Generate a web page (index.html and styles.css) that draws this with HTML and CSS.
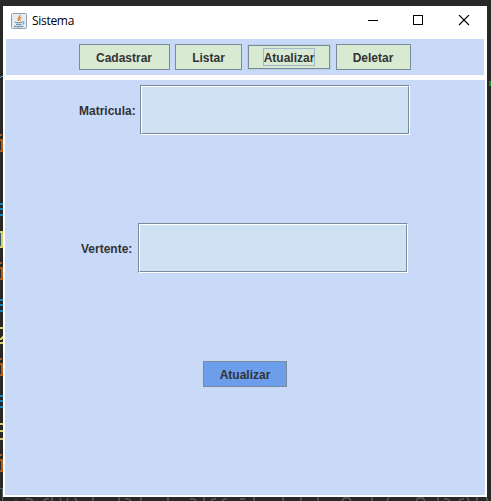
FILE: index.html
```html
<!DOCTYPE html>
<html lang="pt-BR">
<head>
<meta charset="utf-8">
<title>Sistema</title>
<link rel="stylesheet" href="styles.css">
</head>
<body>
<svg class="backdrop" width="491" height="501" viewBox="0 0 491 501" aria-hidden="true" fill="none" shape-rendering="crispEdges">
  <path d="M0 77.5h1M1 76.5h2" stroke="#45b7c5"/>
  <g stroke="#b75a18" stroke-width="2">
    <path d="M0 135h2M0 140h2V151H0M0 263h2M0 268h2V279H0M0 359h2M0 364h2V375H0M0 455h2M0 460h2V471H0"/>
  </g>
  <path d="M0 204h3M0 209h3M0 215h3M0 300h3M0 305h3M0 311h3M0 396h3M0 401h3M0 407h3" stroke="#1686b6" stroke-width="2"/>
  <path d="M0 231v16" stroke="#315865" stroke-width="2"/>
  <path d="M0 232h2V247H0M0 328h3M0 340l3-3M0 343h3M0 424h3M0 431h3M0 439h3" stroke="#d8cc67" stroke-width="2"/>
  <path d="M0 488h2v13" stroke="#53606d"/>
  <path d="M490 81v5" stroke="#168a20" stroke-width="2"/>
  <g stroke="#5b5c5c" stroke-width="1.500" shape-rendering="auto">
    <path d="M16 500v1M26 499q4-1 7 2M44 501q1-3 5-2M52 497v4M60 498l1 3M68 498l-1 3M75 498l2 3M93 497v4M119 497v4M125 499q4-1 6 2M141 497v4M168 497v4M190 499q4-1 6 2M204 497v4M211 501q2-3 5-2M222 501q2-3 5-2M240 499h5M254 497v4M283 497v4M301 497v4M318 497v4M342 501l2-3h5l2 3M372 497v4M389 497l-2 4M416 501l2-3h5l2 3M438 497v4M444 499q4-1 6 2M459 501q2-3 5-2M467 497l2 4M477 497v4M486 497l2 4"/>
  </g>
</svg>
<main class="window">
  <header class="titlebar">
    <svg class="java" width="16" height="16" viewBox="0 0 16 16" fill="none">
      <rect x=".5" y=".5" width="15" height="15" rx="1" fill="#e5edf3" stroke="#8fa1b0"/>
      <path d="M8.800 2c.7 2-3.200 3-1.400 6M10.400 4.200c-2.200 1.100-2.300 2-.9 3.500" stroke="#e47b24" stroke-width="1.200"/>
      <path d="M4 9.200c1.500.8 5.400.8 7 0M5 11.300c1.600.6 3.800.6 5.400 0M3 13.200c3 .8 7 .8 9.500-.2M11.400 8.800c2.300-.4 2.200 1.800.1 2.300" stroke="#557b9b"/>
    </svg>
    <h1 class="title">Sistema</h1>
    <svg class="controls" width="110" height="12" viewBox="0 0 110 12" fill="none" stroke="#000">
      <path d="M0 5.500h10" shape-rendering="crispEdges"/>
      <path d="M45.500.5h9v9h-9z" shape-rendering="crispEdges"/>
      <path d="M91 0l10 10M101 0L91 10" stroke-width="1.100"/>
    </svg>
  </header>
  <nav class="toolbar">
    <button class="button cadastrar">Cadastrar</button>
    <button class="button listar">Listar</button>
    <button class="button focused"><span class="focus-label">Atualizar</span></button>
    <button class="button deletar">Deletar</button>
  </nav>
  <form class="panel">
    <label class="row"><span class="label matricula">Matricula:</span><span class="field"><input class="input" type="text"></span></label>
    <label class="row"><span class="label vertente">Vertente:</span><span class="field"><input class="input" type="text"></span></label>
    <button class="button submit" type="button">Atualizar</button>
  </form>
</main>
</body>
</html>
```
FILE: styles.css
```css
* { box-sizing: border-box; }
html { height: 100%; overflow: hidden; }
body {
  margin: 0;
  height: 100%;
  padding: 6px 4px 4px 3px;
  overflow: hidden;
  background: #282828;
  color: #333;
  font: bold 12px "Liberation Sans", Arial, sans-serif;
}
.backdrop { position: absolute; top: 0; left: 0; }
.window {
  position: relative;
  width: 484px;
  height: 491px;
  background: #fff;
}
.titlebar {
  display: flex;
  align-items: center;
  height: 33px;
  padding: 0 9px 4px 8px;
}
.title {
  margin: 0 0 0 5px;
  color: #000;
  font: 12px/16px "Open Sans", sans-serif;
  letter-spacing: -.3px;
}
.controls { margin-left: auto; }
.toolbar {
  display: flex;
  gap: 5px;
  height: 36px;
  margin: 0 3px;
  padding: 5px 0 5px 73px;
  background: #c9daf8;
}
.button {
  display: flex;
  align-items: center;
  justify-content: center;
  height: 26px;
  margin: 0;
  padding: 1px 0 0;
  border: 1px solid #7a8a99;
  border-radius: 0;
  background: #d9ead3;
  color: #333;
  font: inherit;
  line-height: 14px;
}
.cadastrar { width: 91px; padding-right: 1px; }
.listar { width: 67px; }
.deletar { width: 75px; padding-right: 1px; }
.focused {
  width: 84px;
  padding: 0;
  border-color: #b8cfe5;
  box-shadow: inset 0 0 0 1px #7a8a99;
}
.focus-label {
  display: flex;
  align-items: center;
  justify-content: center;
  width: 52px;
  height: 18px;
  padding-top: 1px;
  border: 1px solid #a3b8cc;
}
.panel {
  display: flex;
  flex-direction: column;
  align-items: center;
  gap: 88px;
  height: 415px;
  margin: 5px 2px 0;
  padding-top: 5px;
  background: #c9daf8;
}
.row {
  display: flex;
  align-items: center;
  gap: 5px;
  height: 50px;
  margin-right: 1px;
}
.label { line-height: 14px; padding-top: 1px; white-space: nowrap; }
.matricula { width: 56px; }
.vertente { width: 52px; }
.field {
  display: block;
  width: 270px;
  height: 50px;
  border: 1px solid;
  border-color: #7a8a99 #fff #fff #7a8a99;
}
.input {
  display: block;
  width: 268px;
  height: 48px;
  padding: 4px;
  border: 1px solid;
  border-color: #fff #7a8a99 #7a8a99 #fff;
  border-radius: 0;
  outline: 0;
  background: #cfe2f3;
  font: inherit;
}
.submit { width: 84px; background: #6d9eeb; }
```
